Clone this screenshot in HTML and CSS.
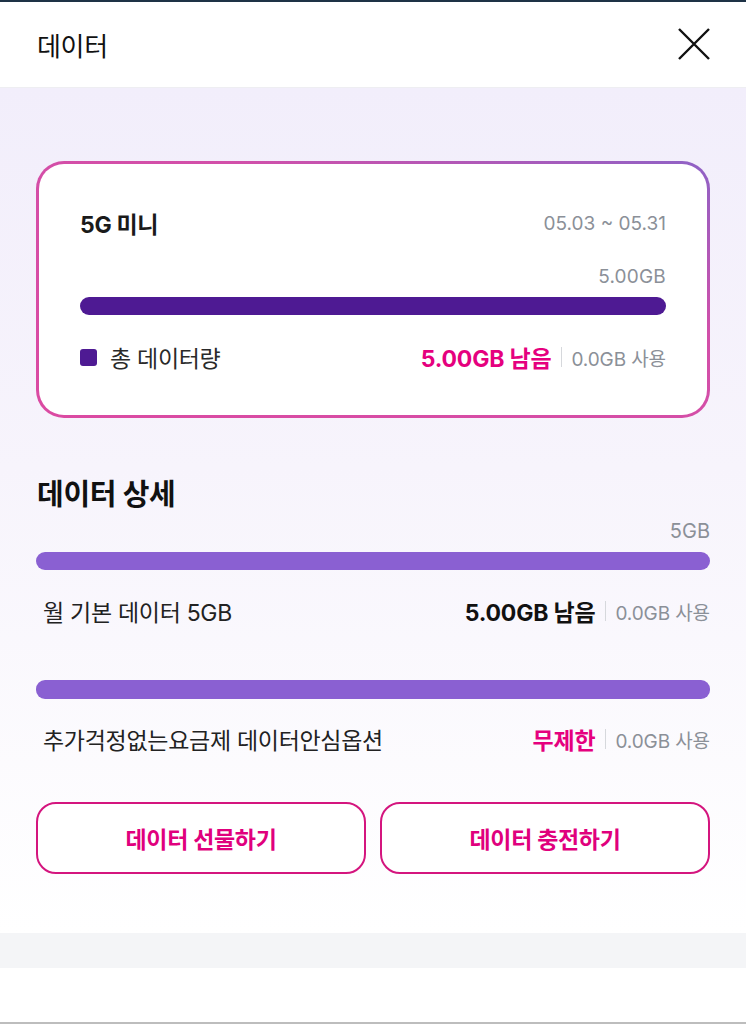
FILE: index.html
```html
<!DOCTYPE html>
<html lang="ko">
  <head>
    <title>데이터</title>
    <meta charset="UTF-8" />
    <meta name="viewport" content="width=device-width, initial-scale=1.0" />
    <link rel="stylesheet" href="styles.css">
  </head>
  <body>
    <div class="topline"></div>
    <header>
      <h1>데이터</h1>
      <button class="close" aria-label="닫기">
        <svg width="32" height="32" viewBox="0 0 32 32">
          <path d="M1 1 L31 31 M31 1 L1 31" stroke="#111" stroke-width="2.4" fill="none" />
        </svg>
      </button>
    </header>

    <section id="main">
      <div class="card">
        <div class="row plan">
          <span class="plan-name">5G 미니</span>
          <span class="period">05.03 ~ 05.31</span>
        </div>
        <div class="amount">5.00GB</div>
        <div class="bar dark"></div>
        <div class="row legend">
          <span class="legend-label"><i class="dot"></i>총 데이터량</span>
          <span class="usage">
            <b class="pink">5.00GB 남음</b><em class="sep"></em><span class="used">0.0GB 사용</span>
          </span>
        </div>
      </div>

      <h2>데이터 상세</h2>
      <div class="amount small">5GB</div>
      <div class="bar light"></div>
      <div class="row detail">
        <span>월 기본 데이터 5GB</span>
        <span class="usage">
          <b>5.00GB 남음</b><em class="sep"></em><span class="used">0.0GB 사용</span>
        </span>
      </div>

      <div class="bar light second"></div>
      <div class="row detail">
        <span>추가걱정없는요금제 데이터안심옵션</span>
        <span class="usage">
          <b class="pink">무제한</b><em class="sep"></em><span class="used">0.0GB 사용</span>
        </span>
      </div>

      <div class="buttons">
        <button class="outline">데이터 선물하기</button>
        <button class="outline">데이터 충전하기</button>
      </div>
    </section>

    <div class="band"></div>
    <div class="blank"></div>
  </body>
</html>
```

FILE: styles.css
```css
body {
  font-family: "Inter", "Noto Sans CJK KR", sans-serif;
  color: #1a1a1a;
  margin: 0;
  padding: 0;
  background: #ffffff;
}
.topline {
  height: 2px;
  background: #1e3246;
}
header {
  height: 85px;
  padding: 0 36px 0 37px;
  display: flex;
  align-items: center;
  justify-content: space-between;
  background: #ffffff;
  border-bottom: 1px solid #eeeef2;
}
header h1 {
  margin: 0;
  font-size: 26px;
  font-weight: 400;
  letter-spacing: -0.3px;
  color: #111;
}
.close {
  border: none;
  background: none;
  padding: 0;
  width: 32px;
  height: 32px;
  margin-top: -2px;
}

#main {
  padding: 73px 36px 59px;
  background: linear-gradient(180deg, #f2eefb 0%, #f7f4fc 45%, #ffffff 100%);
}
.card {
  border: 3px solid transparent;
  border-radius: 28px;
  background:
    linear-gradient(#ffffff, #ffffff) padding-box,
    linear-gradient(20deg, #db4aa2 0%, #d24fa9 65%, #8e62c6 100%) border-box;
  padding: 44px 41px 43px;
}
.row {
  display: flex;
  justify-content: space-between;
  align-items: center;
}
.plan {
  height: 30px;
}
.plan-name {
  font-size: 23px;
  font-weight: 700;
  letter-spacing: -0.3px;
}
.period {
  font-size: 19px;
  color: #8b9098;
}
.amount {
  text-align: right;
  font-size: 19px;
  line-height: 26px;
  color: #8b9098;
  margin-top: 26px;
  letter-spacing: 0.2px;
}
.amount.small {
  font-size: 20px;
  line-height: 24px;
  margin-top: 4px;
  letter-spacing: 0;
}
.bar {
  height: 18px;
  border-radius: 9px;
}
.bar.dark {
  background: #4e1a93;
  margin-top: 7px;
}
.bar.light {
  background: #8a60d2;
  margin-top: 9px;
}
.bar.light.second {
  margin-top: 54px;
  height: 19px;
}
.legend {
  margin-top: 27px;
  height: 30px;
}
.legend-label {
  display: flex;
  align-items: center;
  font-size: 23px;
  letter-spacing: -0.3px;
  color: #2a2a2a;
}
.dot {
  width: 17px;
  height: 17px;
  border-radius: 3px;
  background: #4e1a93;
  margin-right: 13px;
}
.usage {
  display: flex;
  align-items: center;
}
.usage b {
  font-size: 23px;
  font-weight: 700;
  letter-spacing: -0.2px;
  color: #111;
}
.usage b.pink {
  color: #e5007e;
}
.sep {
  width: 1px;
  height: 20px;
  background: #d6d8dc;
  margin: 0 9px 0 10px;
}
.used {
  font-size: 19px;
  color: #8b9098;
  letter-spacing: -0.1px;
}

h2 {
  margin: 57px 0 0 1px;
  font-size: 29px;
  line-height: 40px;
  font-weight: 700;
  letter-spacing: -0.3px;
  color: #111;
}
.detail {
  height: 30px;
  margin-top: 26px;
  padding-left: 7px;
  font-size: 23px;
  color: #222;
  letter-spacing: -0.3px;
}
.bar.second + .detail {
  margin-top: 25px;
}

.buttons {
  display: flex;
  gap: 14px;
  margin-top: 48px;
}
.outline {
  flex: 1;
  height: 72px;
  background: #ffffff;
  border: 2px solid #d4157e;
  border-radius: 20px;
  font-family: inherit;
  font-size: 23px;
  font-weight: 700;
  letter-spacing: -0.3px;
  color: #e0007d;
}

.band {
  height: 35px;
  background: #f4f5f7;
}
.blank {
  height: 54px;
  border-bottom: 2px solid #bdbdbd;
}
```
